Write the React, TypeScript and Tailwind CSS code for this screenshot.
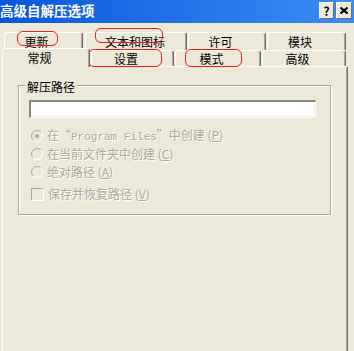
import type { ReactNode } from "react";

const FONT = "font-['Noto_Sans_CJK_SC',sans-serif]";

function Tab({ className, children }: { className: string; children: ReactNode }) {
  return (
    <div
      className={`flex justify-center rounded-t-[3px] border-l border-t border-r border-white border-r-[#716f64] bg-[#ece9d8] text-black shadow-[inset_-1px_0_0_#aca899] ${className}`}
    >
      {children}
    </div>
  );
}

function Radio({ checked }: { checked?: boolean }) {
  return (
    <svg width="12" height="12" viewBox="0 0 12 12" className="shrink-0">
      <circle cx="6" cy="6" r="5.5" fill="#ece9d8" />
      <path d="M9.9 2.1 A5.5 5.5 0 0 0 2.1 9.9" stroke="#aca899" fill="none" />
      <path d="M2.1 9.9 A5.5 5.5 0 0 0 9.9 2.1" stroke="#ffffff" fill="none" />
      {checked && <circle cx="6" cy="6" r="2" fill="#aca899" />}
    </svg>
  );
}

function Disabled({ children }: { children: ReactNode }) {
  return (
    <span className="whitespace-nowrap text-[#aca899] [text-shadow:1px_1px_0_#fff]">{children}</span>
  );
}

export default function App() {
  return (
    <div className={`relative h-[351px] w-[354px] overflow-hidden bg-[#ece9d8] text-[12px] leading-[16px] ${FONT}`}>
      {/* title bar */}
      <div className="flex h-[23px] items-start bg-linear-to-r from-[#0a56dc] to-[#3b8cf5] pr-[2px]">
        <span className="flex-1 pt-[2px] text-[13.5px] font-bold text-white">高级自解压选项</span>
        <div className="flex gap-[2px] pt-[2px]">
          <div className="flex h-[17px] w-[15px] items-center justify-center border border-white border-r-[#716f64] border-b-[#716f64] bg-[#ece9d8] text-[12px] font-bold text-black">
            ?
          </div>
          <div className="flex h-[17px] w-[16px] items-center justify-center border border-white border-r-[#716f64] border-b-[#716f64] bg-[#ece9d8]">
            <svg width="8" height="7" viewBox="0 0 8 7">
              <path d="M0.5 0.5 L7.5 6.5 M7.5 0.5 L0.5 6.5" stroke="#000" strokeWidth="2" />
            </svg>
          </div>
        </div>
      </div>

      <div className="pt-[9px]">
        {/* tab row 1 */}
        <div className="flex h-[18px] pl-[4px]">
          <Tab className="w-[79px] pr-[14px] pt-[1px]">更新</Tab>
          <Tab className="ml-[2px] w-[102px] pr-[2px] pt-[1px]">文本和图标</Tab>
          <Tab className="ml-[1px] w-[78px] pr-[13px] pt-[1px]">许可</Tab>
          <Tab className="ml-[1px] w-[79px] pr-[13px] pt-[1px]">模块</Tab>
        </div>

        {/* tab row 2 */}
        <div className="flex h-[16px] pl-[2px]">
          <Tab className="relative z-10 -mt-[2px] h-[19px] w-[88px] pr-[13px] pt-[1px]">常规</Tab>
          <Tab className="ml-[1px] w-[83px] pr-[13px]">设置</Tab>
          <Tab className="ml-[1px] w-[86px] pr-[13px]">模式</Tab>
          <Tab className="ml-[1px] w-[84px] pr-[13px]">高级</Tab>
        </div>

        {/* panel */}
        <div className="ml-[2px] h-[300px] w-[346px] border-l border-t border-r border-white border-r-[#716f64] pt-[18px] pl-[15px] shadow-[inset_-1px_0_0_#aca899]">
          <div className="relative h-[130px] w-[313px] border border-[#aca899] shadow-[1px_1px_0_#fff,inset_1px_1px_0_#fff]">
            <span className="absolute -top-[7px] left-[6px] bg-[#ece9d8] px-[2px] text-black">解压路径</span>

            <div className="ml-[10px] mt-[14px] h-[18px] w-[287px] border-t-2 border-l-2 border-t-[#8a877a] border-l-[#8a877a] border-b border-r border-b-white border-r-white bg-white shadow-[inset_-1px_-1px_0_#f1efe2]" />

            <div className="mt-[9px] flex flex-col">
              <div className="flex h-[18px] items-center gap-[4px] pl-[12px]">
                <Radio checked />
                <Disabled>
                  在“<span className="font-['Liberation_Mono',monospace] text-[11px]">Program Files</span>”中创建 (<u>P</u>)
                </Disabled>
              </div>
              <div className="flex h-[18px] items-center gap-[4px] pl-[12px]">
                <Radio />
                <Disabled>
                  在当前文件夹中创建 (<u>C</u>)
                </Disabled>
              </div>
              <div className="flex h-[18px] items-center gap-[4px] pl-[12px]">
                <Radio />
                <Disabled>
                  绝对路径 (<u>A</u>)
                </Disabled>
              </div>
              <div className="mt-[4px] flex h-[18px] items-center gap-[4px] pl-[12px]">
                <div className="h-[13px] w-[13px] shrink-0 border border-[#aca899] border-b-white border-r-white bg-[#ece9d8]" />
                <Disabled>
                  保存并恢复路径 (<u>V</u>)
                </Disabled>
              </div>
            </div>
          </div>
        </div>
      </div>

      {/* red annotation marks */}
      <div className="pointer-events-none absolute left-[17px] top-[31px] h-[15px] w-[41px] rounded-[6px] border border-[#ee1c1c]" />
      <div className="pointer-events-none absolute left-[95px] top-[28px] h-[15px] w-[68px] rounded-[6px] border border-[#ee1c1c]" />
      <div className="pointer-events-none absolute left-[88px] top-[49px] h-[18px] w-[74px] rounded-[6px] border border-[#ee1c1c]" />
      <div className="pointer-events-none absolute left-[185px] top-[49px] h-[18px] w-[57px] rounded-[6px] border border-[#ee1c1c]" />
    </div>
  );
}
